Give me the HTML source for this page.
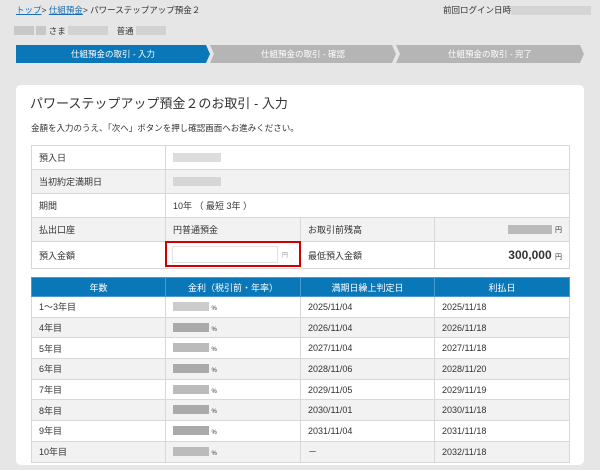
<!DOCTYPE html>
<html><head><meta charset="utf-8"><style>
*{margin:0;padding:0;box-sizing:border-box}
body{width:600px;height:470px;overflow:hidden;background:#e6e6e6;font-family:"Liberation Sans","Noto Sans CJK JP",sans-serif;color:#333;font-size:9px;position:relative}
.a{position:absolute}
.blur{display:inline-block;background:#c8c8c8;height:9px;vertical-align:-1px}
.step{position:absolute;top:45px;height:18px;color:#fff;font-size:8.5px;line-height:18px;text-align:center}
.card{position:absolute;left:16px;top:85px;width:568px;height:380px;background:#fff;border-radius:5px}
table{border-collapse:collapse;position:absolute;table-layout:fixed}
td,th{border:1px solid #d8d8d8;padding:0 7px;font-weight:normal;text-align:left}
.info{left:15px;top:60px;width:538px}
.info tr{height:24px}
.info tr.g td{background:#f2f2f2}
.rate{left:15px;top:192px;width:538px}
.rate th{background:#0a77b8;color:#fff;text-align:center;height:19px;border-color:#4a9acb}
.rate td{height:20.7px}
.rate tr:nth-child(odd) td{background:#f2f2f2}
</style></head><body>
<div class="a" style="left:16px;top:4px;font-size:8.5px"><span style="color:#1a6fb0;text-decoration:underline">トップ</span>&gt; <span style="color:#1a6fb0;text-decoration:underline">仕組預金</span>&gt; パワーステップアップ預金２</div>
<div class="a" style="left:443px;top:4px;font-size:8.5px">前回ログイン日時<span class="blur" style="width:80px;background:#d4d4d4;vertical-align:middle"></span></div>
<div class="a" style="left:14px;top:25px;font-size:8.5px"><span class="blur" style="width:20px"></span> <span class="blur" style="width:10px"></span> さま <span class="blur" style="width:40px;background:#d2d2d2"></span>　普通 <span class="blur" style="width:30px;background:#d2d2d2"></span></div>
<svg class="a" style="left:16px;top:45px" width="570" height="18">
<polygon points="0,0 190,0 194,9 190,18 0,18" fill="#0a77b8"/>
<polygon points="194,0 376,0 380,9 376,18 194,18 198,9" fill="#b5b5b5"/>
<polygon points="380,0 564,0 568,9 564,18 380,18 384,9" fill="#b5b5b5"/>
</svg>
<div class="step" style="left:16px;width:194px">仕組預金の取引 - 入力</div>
<div class="step" style="left:210px;width:186px">仕組預金の取引 - 確認</div>
<div class="step" style="left:396px;width:188px">仕組預金の取引 - 完了</div>
<div class="card">
<div class="a" style="left:14px;top:8px;font-size:13px;color:#333">パワーステップアップ預金２のお取引 - 入力</div>
<div class="a" style="left:15px;top:37px;font-size:8.5px">金額を入力のうえ、「次へ」ボタンを押し確認画面へお進みください。</div>
<table class="info">
<col style="width:134px"><col style="width:135px"><col style="width:134px"><col style="width:135px">
<tr><td>預入日</td><td colspan="3"><span class="blur" style="width:48px;background:#ddd"></span></td></tr>
<tr class="g"><td>当初約定満期日</td><td colspan="3"><span class="blur" style="width:48px;background:#d6d6d6"></span></td></tr>
<tr><td>期間</td><td colspan="3">10年 （ 最短 3年 ）</td></tr>
<tr class="g"><td>払出口座</td><td>円普通預金</td><td>お取引前残高</td><td style="text-align:right"><span class="blur" style="width:44px;background:#bbb;vertical-align:middle"></span> <span style="font-size:7px">円</span></td></tr>
<tr style="height:27px"><td>預入金額</td><td style="position:relative"><div style="position:absolute;left:-1px;top:-1px;width:136px;height:26px;border:2px solid #d00000"></div><div style="position:absolute;left:6px;top:4px;width:106px;height:17px;border:1px solid #e2e2e2"></div><span style="position:absolute;left:116px;top:8px;font-size:6px;color:#999">円</span></td><td>最低預入金額</td><td style="text-align:right;font-size:12px;font-weight:bold">300,000 <span style="font-size:7px;font-weight:normal">円</span></td></tr>
</table>
<table class="rate">
<col style="width:134px"><col style="width:135px"><col style="width:134px"><col style="width:135px">
<tr><th>年数</th><th>金利（税引前・年率）</th><th>満期日繰上判定日</th><th>利払日</th></tr>
<tr><td>1～3年目</td><td><span class="blur" style="width:36px;background:#ccc"></span> <span style="font-size:6px">%</span></td><td>2025/11/04</td><td>2025/11/18</td></tr>
<tr><td>4年目</td><td><span class="blur" style="width:36px;background:#aaa"></span> <span style="font-size:6px">%</span></td><td>2026/11/04</td><td>2026/11/18</td></tr>
<tr><td>5年目</td><td><span class="blur" style="width:36px;background:#bbb"></span> <span style="font-size:6px">%</span></td><td>2027/11/04</td><td>2027/11/18</td></tr>
<tr><td>6年目</td><td><span class="blur" style="width:36px;background:#aaa"></span> <span style="font-size:6px">%</span></td><td>2028/11/06</td><td>2028/11/20</td></tr>
<tr><td>7年目</td><td><span class="blur" style="width:36px;background:#bbb"></span> <span style="font-size:6px">%</span></td><td>2029/11/05</td><td>2029/11/19</td></tr>
<tr><td>8年目</td><td><span class="blur" style="width:36px;background:#aaa"></span> <span style="font-size:6px">%</span></td><td>2030/11/01</td><td>2030/11/18</td></tr>
<tr><td>9年目</td><td><span class="blur" style="width:36px;background:#aaa"></span> <span style="font-size:6px">%</span></td><td>2031/11/04</td><td>2031/11/18</td></tr>
<tr><td>10年目</td><td><span class="blur" style="width:36px;background:#bbb"></span> <span style="font-size:6px">%</span></td><td>－</td><td>2032/11/18</td></tr>
</table>
</div>
</body></html>
